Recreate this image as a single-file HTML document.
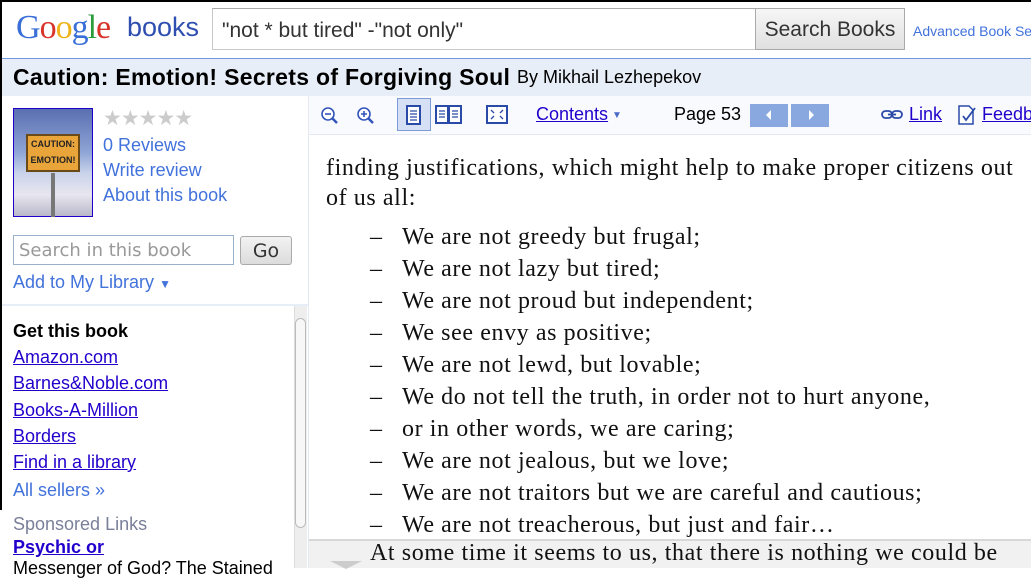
<!DOCTYPE html>
<html><head><meta charset="utf-8"><style>
*{margin:0;padding:0;box-sizing:border-box}
body{width:1031px;height:568px;overflow:hidden;background:#fff;font-family:"Liberation Sans",Arial,sans-serif;position:relative}
.a{position:absolute;white-space:nowrap}
.lk{color:#4272db}
.bl{color:#2200cc;text-decoration:underline}
.bk{font-family:"Liberation Serif",serif;font-size:24px;color:#111;letter-spacing:0.6px}
</style></head><body>
<div class="a" style="left:0;top:0;width:1031px;height:2px;background:#000"></div>
<div class="a" style="left:0;top:0;width:2px;height:510px;background:#000;z-index:5"></div>
<div class="a" style="left:16px;top:9px;font-family:'Liberation Serif',serif;font-size:34px;letter-spacing:-1px"><span style="color:#3a6fd8">G</span><span style="color:#d8352a">o</span><span style="color:#efb31a">o</span><span style="color:#3a6fd8">g</span><span style="color:#2b9c3c">l</span><span style="color:#d8352a">e</span></div>
<div class="a" style="left:127px;top:12px;font-size:27px;color:#2f4fb0">books</div>
<div class="a" style="left:212px;top:8px;width:544px;height:42px;border:1px solid #c8c8c8;border-top-color:#aaa;font-size:21px;color:#333;padding:10px 9px">"not * but tired" -"not only"</div>
<div class="a" style="left:755px;top:8px;width:150px;height:42px;border:1px solid #aaa;background:linear-gradient(#f6f6f6,#e0e0e0);font-size:21px;color:#333;text-align:center;line-height:42px">Search Books</div>
<div class="a lk" style="left:913px;top:23px;font-size:14px">Advanced Book Search</div>
<div class="a" style="left:0;top:58px;width:1031px;height:38px;background:#e8eef8;border-top:1px solid #6f96e0"></div>
<div class="a" style="left:13px;top:64px;font-size:23px;font-weight:bold;color:#000;letter-spacing:0.3px">Caution: Emotion! Secrets of Forgiving Soul</div>
<div class="a" style="left:517px;top:67px;font-size:18px;color:#000">By Mikhail Lezhepekov</div>
<div class="a" style="left:308px;top:96px;width:1px;height:472px;background:#e4e8f0"></div>
<div class="a" style="left:13px;top:108px;width:80px;height:109px;border:1px solid #2200cc;background:linear-gradient(#5a6fb0 0%,#8ea4d6 40%,#c9d3ea 60%,#e8e6ef 80%,#b8b8c8 100%)">
 <div style="position:absolute;left:12px;top:25px;width:54px;height:38px;background:#e9a53a;border:2px solid #6b4a1a;font-size:9px;font-weight:bold;text-align:center;line-height:16px;color:#222">CAUTION:<br>EMOTION!</div>
 <div style="position:absolute;left:37px;top:64px;width:4px;height:44px;background:#777"></div>
</div>
<div class="a" style="left:103px;top:106px;font-size:21px;color:#ccc;letter-spacing:-1px">★★★★★</div>
<div class="a lk" style="left:103px;top:135px;font-size:18px">0 Reviews</div>
<div class="a lk" style="left:103px;top:160px;font-size:18px">Write review</div>
<div class="a lk" style="left:103px;top:185px;font-size:18px">About this book</div>
<div class="a" style="left:13px;top:235px;width:221px;height:30px;border:1px solid #9ab0c8;font-family:'DejaVu Sans',sans-serif;font-size:18px;color:#999;padding:4px 5px">Search in this book</div>
<div class="a" style="left:240px;top:236px;width:52px;height:29px;border:1px solid #aaa;border-radius:3px;background:linear-gradient(#f2f2f2,#dcdcdc);font-family:'DejaVu Sans',sans-serif;font-size:19px;color:#333;text-align:center;line-height:29px">Go</div>
<div class="a lk" style="left:13px;top:272px;font-size:18px">Add to My Library <span style="font-size:12px">▼</span></div>
<div class="a" style="left:0;top:304px;width:308px;height:2px;background:#e8eef8"></div>
<div class="a" style="left:294px;top:306px;width:13px;height:262px;background:#eee;border-left:1px solid #ddd"></div>
<div class="a" style="left:295px;top:318px;width:11px;height:210px;background:#f7f7f7;border:1px solid #bbb;border-radius:6px"></div>
<div class="a" style="left:13px;top:321px;font-size:18px;font-weight:bold;color:#000">Get this book</div>
<div class="a bl" style="left:13px;top:347px;font-size:18px">Amazon.com</div>
<div class="a bl" style="left:13px;top:373px;font-size:18px">Barnes&amp;Noble.com</div>
<div class="a bl" style="left:13px;top:400px;font-size:18px">Books-A-Million</div>
<div class="a bl" style="left:13px;top:426px;font-size:18px">Borders</div>
<div class="a bl" style="left:13px;top:452px;font-size:18px">Find in a library</div>
<div class="a lk" style="left:13px;top:480px;font-size:18px">All sellers »</div>
<div class="a" style="left:13px;top:514px;font-size:18px;color:#7a7f99">Sponsored Links</div>
<div class="a bl" style="left:13px;top:537px;font-size:18px;font-weight:bold">Psychic or</div>
<div class="a" style="left:13px;top:558px;font-size:18px;color:#000">Messenger of God? The Stained</div>
<div class="a" style="left:309px;top:96px;width:722px;height:39px;background:#f9fafd;border-bottom:1px solid #e4e8f4"></div>
<svg class="a" style="left:318px;top:104px" width="30" height="24" viewBox="0 0 30 24"><circle cx="10" cy="10" r="6" fill="#fff" stroke="#3355bb" stroke-width="1.6"/><path d="M7 10h6" stroke="#3355bb" stroke-width="1.6"/><path d="M14 14l5 5" stroke="#3355bb" stroke-width="2.5"/></svg>
<svg class="a" style="left:354px;top:104px" width="30" height="24" viewBox="0 0 30 24"><circle cx="10" cy="10" r="6" fill="#fff" stroke="#3355bb" stroke-width="1.6"/><path d="M7 10h6M10 7v6" stroke="#3355bb" stroke-width="1.6"/><path d="M14 14l5 5" stroke="#3355bb" stroke-width="2.5"/></svg>
<div class="a" style="left:397px;top:98px;width:34px;height:33px;background:#d6e0f4;border:1px solid #7a9ad8"></div>
<svg class="a" style="left:405px;top:105px" width="18" height="20" viewBox="0 0 18 20"><rect x="2" y="1" width="13" height="18" fill="#fff" stroke="#2a4aa8" stroke-width="2"/><path d="M5 6h7M5 9h7M5 12h7M5 15h7" stroke="#2a4aa8" stroke-width="1.3"/></svg>
<svg class="a" style="left:435px;top:105px" width="28" height="20" viewBox="0 0 28 20"><rect x="1" y="1" width="12" height="17" fill="#fff" stroke="#2a4aa8" stroke-width="2"/><rect x="14" y="1" width="12" height="17" fill="#fff" stroke="#2a4aa8" stroke-width="2"/><path d="M4 6h6M4 9h6M4 12h6M17 6h6M17 9h6M17 12h6" stroke="#2a4aa8" stroke-width="1.3"/></svg>
<svg class="a" style="left:486px;top:105px" width="24" height="20" viewBox="0 0 24 20"><rect x="1" y="1" width="20" height="17" fill="#fff" stroke="#2a4aa8" stroke-width="2"/><path d="M5 5l3 3M17 5l-3 3M5 14l3-3M17 14l-3-3" stroke="#2a4aa8" stroke-width="1.3"/></svg>
<div class="a bl" style="left:536px;top:104px;font-size:18px">Contents</div>
<div class="a" style="left:612px;top:110px;font-size:10px;color:#4a6ac8">▼</div>
<div class="a" style="left:674px;top:104px;font-size:18px;color:#000">Page 53</div>
<div class="a" style="left:750px;top:104px;width:38px;height:23px;background:#8aa8e0"></div>
<div class="a" style="left:791px;top:104px;width:38px;height:23px;background:#8aa8e0"></div>
<div class="a" style="left:766px;top:110px;width:0;height:0;border-top:5px solid transparent;border-bottom:5px solid transparent;border-right:5px solid #fff"></div>
<div class="a" style="left:809px;top:110px;width:0;height:0;border-top:5px solid transparent;border-bottom:5px solid transparent;border-left:5px solid #fff"></div>
<svg class="a" style="left:881px;top:108px" width="24" height="14" viewBox="0 0 24 14"><rect x="1" y="3" width="10" height="7" rx="3.5" fill="none" stroke="#2a4aa8" stroke-width="1.8"/><rect x="11" y="3" width="10" height="7" rx="3.5" fill="none" stroke="#2a4aa8" stroke-width="1.8"/><path d="M7 6.5h8" stroke="#2a4aa8" stroke-width="1.8"/></svg>
<div class="a bl" style="left:909px;top:104px;font-size:18px">Link</div>
<svg class="a" style="left:957px;top:104px" width="22" height="22" viewBox="0 0 22 22"><path d="M2 2h10l4 4v14H2z" fill="#fff" stroke="#2a4aa8" stroke-width="1.5"/><path d="M6 12l3 4 9-12" fill="none" stroke="#2a4aa8" stroke-width="1.8"/></svg>
<div class="a bl" style="left:982px;top:104px;font-size:18px">Feedback</div>
<div class="a bk" style="left:326px;top:155px">finding justifications, which might help to make proper citizens out</div>
<div class="a bk" style="left:326px;top:185px">of us all:</div>
<div class="a bk" style="left:370px;top:221px;line-height:32px">–<br>–<br>–<br>–<br>–<br>–<br>–<br>–<br>–<br>–</div>
<div class="a bk" style="left:402px;top:221px;line-height:32px">We are not greedy but frugal;<br>We are not lazy but tired;<br>We are not proud but independent;<br>We see envy as positive;<br>We are not lewd, but lovable;<br>We do not tell the truth, in order not to hurt anyone,<br>or in other words, we are caring;<br>We are not jealous, but we love;<br>We are not traitors but we are careful and cautious;<br>We are not treacherous, but just and fair…</div>
<div class="a" style="left:309px;top:539px;width:722px;height:29px;background:#f1f1f1;border-top:2px solid #d8d8d8"></div>
<div class="a" style="left:330px;top:561px;width:0;height:0;border-left:16px solid transparent;border-right:16px solid transparent;border-top:8px solid #ccc"></div>
<div class="a bk" style="left:370px;top:540px">At some time it seems to us, that there is nothing we could be</div>
</body></html>
